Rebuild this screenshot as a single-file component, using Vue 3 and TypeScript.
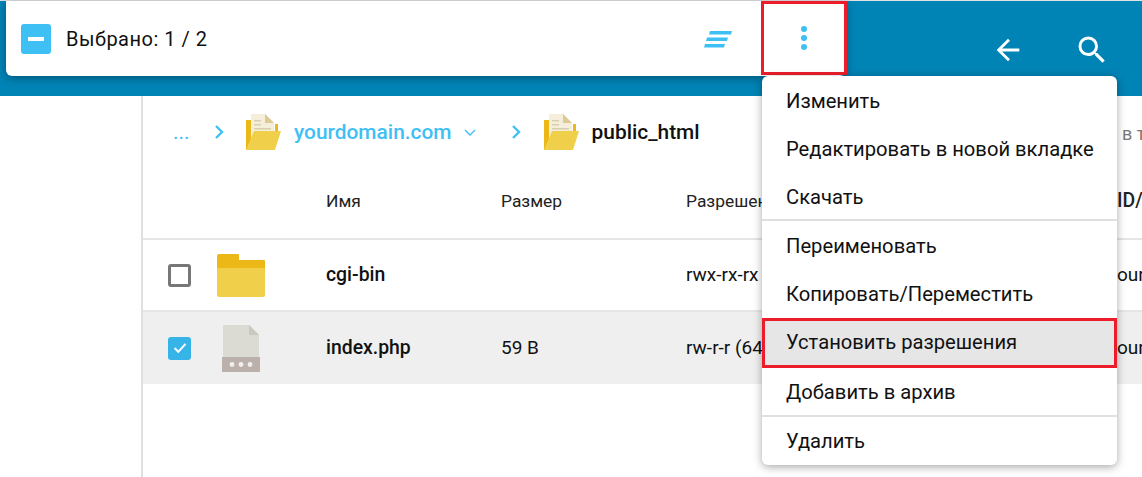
<script setup lang="ts">
interface MenuItem { label: string; kind?: 'active' | 'divider' | 'tall' }
const menu: MenuItem[] = [
  { label: 'Изменить' },
  { label: 'Редактировать в новой вкладке' },
  { label: 'Скачать', kind: 'divider' },
  { label: 'Переименовать' },
  { label: 'Копировать/Переместить', kind: 'tall' },
  { label: 'Установить разрешения', kind: 'active' },
  { label: 'Добавить в архив', kind: 'divider' },
  { label: 'Удалить' },
]
</script>

<template>
  <div class="page">
    <header class="topbar">
      <div class="spacer"></div>
      <svg class="tool-icon" viewBox="0 0 24 24" width="34" height="34"><path d="M20 11H7.830l5.590-5.590L12 4l-8 8 8 8 1.410-1.410L7.830 13H20z" fill="#fff"/></svg>
      <svg class="tool-icon search" viewBox="0 0 24 24" width="36" height="36"><path d="M15.500 14h-.790l-.280-.270A6.470 6.470 0 0 0 16 9.500 6.500 6.500 0 1 0 9.500 16c1.610 0 3.090-.590 4.230-1.570l.270.280v.790l5 4.990L20.490 19zm-6 0C7.010 14 5 11.990 5 9.500S7.010 5 9.500 5 14 7.010 14 9.500 11.990 14 9.500 14z" fill="#fff"/></svg>
    </header>

    <div class="selection">
      <span class="minus"><i></i></span>
      <span class="sel-text">Выбрано: 1 / 2</span>
      <svg class="sort" width="28" height="17" viewBox="0 0 28 17"><path d="M6 0h22l-1 3.500H5zM3 6.500h21l-1 3.500H2zM1 13h20l-1 3.500H0z" fill="#3fc0f5"/></svg>
      <div class="dots-box"><b></b><b></b><b></b></div>
    </div>

    <div class="content">
      <aside class="side"></aside>
      <main class="main">
        <nav class="crumbs">
          <span class="dots-link">...</span>
          <svg class="chev" width="12" height="16" viewBox="0 0 12 16"><path d="M2 2l6 6-6 6" fill="none" stroke="#3fc0f5" stroke-width="2.400"/></svg>
          <svg class="open-folder" width="38" height="38" viewBox="0 0 38 38"><path d="M1 7h5v30H1z" fill="#ecb818"/><path d="M30 11h3v8h-3z" fill="#ecb818"/><path d="M6 1h14l9 9v16H6z" fill="#f4eeda"/><path d="M20 1l9 9h-9z" fill="#dcc993"/><path d="M9 7h7v1.500H9zM9 11h7v1.500H9zM9 15h17v1.500H9z" fill="#d8cfae"/><path d="M9 18h27l-6 19H1z" fill="#f0cf4b"/></svg>
          <span class="crumb-link">yourdomain.com</span>
          <svg class="caret" width="12" height="7" viewBox="0 0 12 7"><path d="M1 1l5 5 5-5" fill="none" stroke="#3fc0f5" stroke-width="1.400"/></svg>
          <svg class="chev two" width="12" height="16" viewBox="0 0 12 16"><path d="M2 2l6 6-6 6" fill="none" stroke="#3fc0f5" stroke-width="2.400"/></svg>
          <svg class="open-folder" width="38" height="38" viewBox="0 0 38 38"><path d="M1 7h5v30H1z" fill="#ecb818"/><path d="M30 11h3v8h-3z" fill="#ecb818"/><path d="M6 1h14l9 9v16H6z" fill="#f4eeda"/><path d="M20 1l9 9h-9z" fill="#dcc993"/><path d="M9 7h7v1.500H9zM9 11h7v1.500H9zM9 15h17v1.500H9z" fill="#d8cfae"/><path d="M9 18h27l-6 19H1z" fill="#f0cf4b"/></svg>
          <span class="crumb-current">public_html</span>
          <span class="crumb-right">в т</span>
        </nav>

        <div class="row head">
          <span class="c-check"></span>
          <span class="c-icon"></span>
          <span class="c-name">Имя</span>
          <span class="c-size">Размер</span>
          <span class="c-perm">Разрешения</span>
          <span class="c-owner strong">ID/</span>
        </div>

        <div class="row item">
          <span class="c-check"><span class="box"></span></span>
          <span class="c-icon">
            <svg width="48" height="43" viewBox="0 0 48 43"><path d="M0 2a2 2 0 0 1 2-2h19a1 1 0 0 1 1 1v5h25a1 1 0 0 1 1 1v8H0z" fill="#ecb818"/><path d="M0 14h48v27a2 2 0 0 1-2 2H2a2 2 0 0 1-2-2z" fill="#f0cf4b"/></svg>
          </span>
          <span class="c-name strong">cgi-bin</span>
          <span class="c-size"></span>
          <span class="c-perm">rwx-rx-rx</span>
          <span class="c-owner">our</span>
        </div>

        <div class="row item selected">
          <span class="c-check">
            <span class="box on"><svg width="14" height="12" viewBox="0 0 14 12"><path d="M1.500 6l3.800 3.800L12.500 1.800" fill="none" stroke="#fff" stroke-width="2"/></svg></span>
          </span>
          <span class="c-icon file">
            <svg width="38" height="48" viewBox="0 0 38 48"><path d="M1 1h26l10 10v23H1z" fill="#dbdbd3"/><path d="M27 1l10 10H27z" fill="#c8c8bc"/><path d="M0 33h38v15H0z" fill="#bbb0aa"/><circle cx="10" cy="40.500" r="2.400" fill="#f1eeee"/><circle cx="19" cy="40.500" r="2.400" fill="#f1eeee"/><circle cx="28" cy="40.500" r="2.400" fill="#f1eeee"/></svg>
          </span>
          <span class="c-name strong">index.php</span>
          <span class="c-size">59 В</span>
          <span class="c-perm">rw-r-r (644)</span>
          <span class="c-owner">our</span>
        </div>
      </main>
    </div>

    <ul class="menu">
      <li v-for="m in menu" :key="m.label" :class="m.kind">{{ m.label }}</li>
    </ul>
  </div>
</template>

<style>
html, body { margin: 0; background: #fff; overflow: hidden; }
</style>

<style scoped>
.page {
  position: relative;
  width: 1142px;
  height: 477px;
  overflow: hidden;
  font-family: Roboto, "Liberation Sans", sans-serif;
  color: #111;
  background: #fff;
}
.topbar {
  height: 96px;
  background: #0083b5;
  border-top: 1px solid #e0e2e6;
  box-sizing: border-box;
  display: flex;
  align-items: center;
}
.spacer { flex: 1; }
.tool-icon { margin-top: 3px; flex: none; }
.tool-icon.search { margin-left: 49px; margin-right: 32px; }
.selection {
  position: absolute;
  left: 6px;
  top: 1px;
  width: 840px;
  height: 75px;
  background: #fff;
  border-radius: 0 0 6px 6px;
  box-shadow: 0 2px 8px rgba(0, 0, 0, .35);
  display: flex;
  align-items: center;
  box-sizing: border-box;
  padding-left: 15px;
}
.minus {
  width: 30px;
  height: 30px;
  border-radius: 3px;
  background: #3fc0f5;
  display: flex;
  align-items: center;
  justify-content: center;
}
.minus i { width: 16px; height: 4px; background: #fff; display: block; }
.sel-text { margin-left: 15px; font-size: 20px; letter-spacing: .5px; flex: 1; }
.sort { margin-right: 29px; margin-top: 2px; }
.dots-box {
  width: 86px;
  height: 74px;
  align-self: flex-start;
  box-sizing: border-box;
  border: 3px solid #ed1c2b;
  display: flex;
  flex-direction: column;
  align-items: center;
  justify-content: center;
  gap: 2.500px;
  background: #fff;
  margin-right: -1px;
}
.dots-box b { width: 6.500px; height: 6.500px; border-radius: 50%; background: #3fc0f5; display: block; }
.content { display: flex; height: 381px; }
.side { width: 141px; flex: none; border-right: 2px solid #e0e0e0; }
.main { flex: 1; min-width: 0; }
.crumbs {
  height: 70px;
  padding-top: 2px;
  box-sizing: border-box;
  display: flex;
  align-items: center;
  position: relative;
  padding-left: 30px;
  font-size: 20.900px;
  font-weight: 500;
}
.dots-link { color: #3fc0f5; width: 41px; font-weight: 400; }
.chev { flex: none; }
.open-folder { flex: none; margin-left: 19px; margin-right: 11px; }
.open-folder ~ .open-folder { margin-left: 20px; }
.crumb-link { color: #3fc0f5; }
.caret { margin-left: 12px; flex: none; }
.chev.two { margin-left: 35px; }
.crumb-current { color: #111; }
.crumb-right { position: absolute; left: 979px; top: 27px; color: #777; font-size: 18px; font-weight: 400; white-space: nowrap; }
.row {
  display: flex;
  align-items: center;
  white-space: nowrap;
  overflow: hidden;
  font-size: 19px;
}
.head { height: 74px; border-bottom: 2px solid #e6e6e6; padding-bottom: 3px; box-sizing: border-box; color: #222; font-size: 17.400px; }
.item { height: 72px; border-bottom: 2px solid #e6e6e6; box-sizing: border-box; }
.item .c-name, .item .c-perm, .item .c-size, .item .c-owner { padding-bottom: 2px; }
.item.selected { background: #efefef; border-bottom: 0; }
.c-check { width: 74px; flex: none; padding-left: 25px; box-sizing: border-box; display: flex; }
.c-icon { width: 109px; flex: none; display: flex; }
.c-icon.file { padding-left: 5px; box-sizing: border-box; }
.c-name { width: 175px; flex: none; }
.c-size { width: 185px; flex: none; }
.c-perm { width: 431px; flex: none; }
.c-owner { flex: none; }
.strong { font-weight: 500; font-size: 19.400px; }
.box {
  width: 23px;
  height: 23px;
  border: 3px solid #777;
  border-radius: 3px;
  box-sizing: border-box;
  display: flex;
  align-items: center;
  justify-content: center;
}
.box.on { background: #36b4e8; border: 0; }
.menu {
  position: absolute;
  left: 762px;
  top: 76px;
  width: 355px;
  height: 389px;
  margin: 0;
  padding: 0;
  list-style: none;
  background: #fff;
  border-radius: 6px;
  box-shadow: 0 2px 8px rgba(0, 0, 0, .35);
  font-size: 20.200px;
  box-sizing: border-box;
  display: flex;
  flex-direction: column;
}
.menu li {
  height: 48px;
  flex: none;
  display: flex;
  align-items: center;
  padding-left: 24px;
  padding-top: 2px;
  box-sizing: border-box;
}
.menu li.tall { height: 49px; padding-top: 0; }
.menu li.divider { height: 49px; border-bottom: 2px solid #e0e0e0; }
.menu li.divider:nth-child(7) { padding-top: 0; }
.menu li:last-child { padding-top: 0; }
.menu li.active {
  height: 50px;
  background: #e6e6e6;
  border: 3px solid #ed1c2b;
  padding-left: 21px;
  padding-top: 0;
  padding-bottom: 2px;
}
</style>
